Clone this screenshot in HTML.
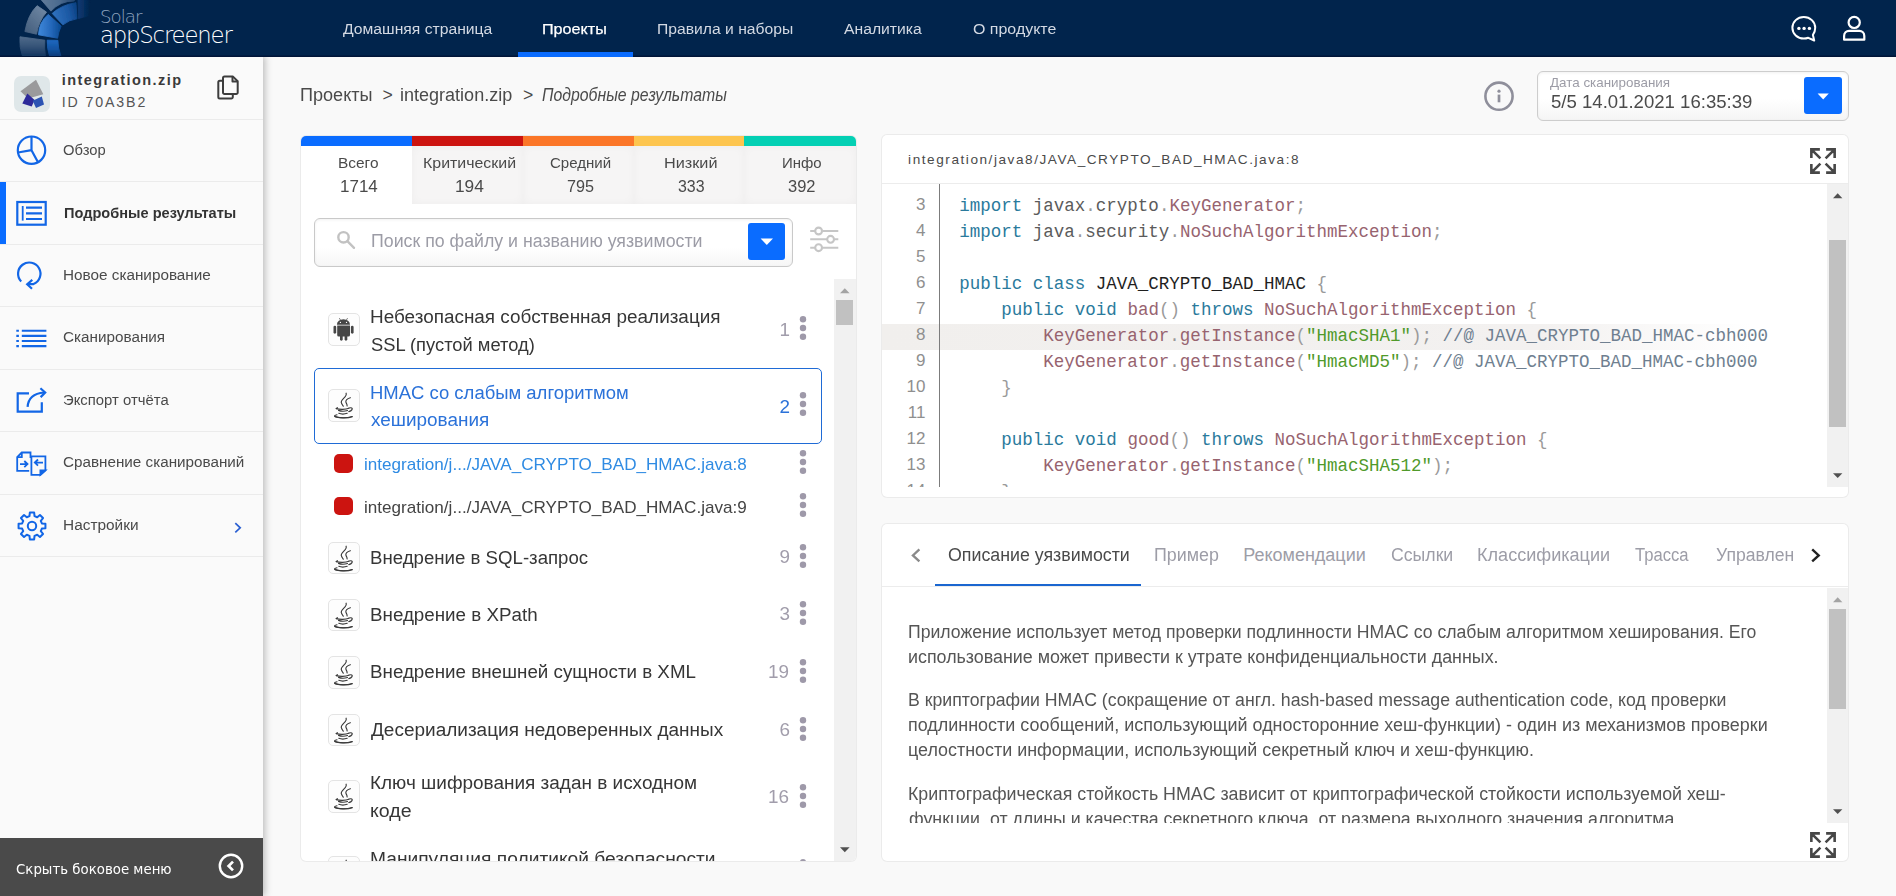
<!DOCTYPE html>
<html lang="ru">
<head>
<meta charset="utf-8">
<title>Solar appScreener</title>
<style>
*{box-sizing:border-box;margin:0;padding:0}
html,body{width:1896px;height:896px;overflow:hidden;background:#f9f9f9;font-family:"Liberation Sans",sans-serif;color:#4a4a4a}
body{position:relative}
.abs{position:absolute}
.t{position:absolute;white-space:nowrap;line-height:1}
#hdr{position:absolute;left:0;top:0;width:1896px;height:56.7px;background:linear-gradient(#01244c 0,#01244c 54.5px,#001336 56.7px);overflow:hidden}
#side{position:absolute;left:0;top:56px;width:263px;height:840px;background:#fafafa;box-shadow:2px 0 7px rgba(0,0,0,.25)}
.panel{position:absolute;background:#fff;border-radius:5px;box-shadow:0 0 0 1px rgba(0,0,0,.045),0 0 2px rgba(0,0,0,.05)}
.ib{position:absolute;left:328.4px;width:31.6px;height:32.4px;border:1px solid #e4e4e4;border-radius:5px;background:#fdfdfd;overflow:hidden}
.ib svg{position:absolute;left:-1px;top:-1px}
</style>
</head>
<body>
<main>
<div class="t" style="left:299.57px;top:84px;line-height:22px;font-size:17.6px;color:#4a4a4a;transform:scaleX(1.0282);transform-origin:0 0">Проекты</div>
<div class="t" style="left:382.4px;top:84px;line-height:22px;font-size:17.6px;color:#4a4a4a">&gt;</div>
<div class="t" style="left:400.38px;top:84px;line-height:22px;font-size:17.6px;color:#4a4a4a;transform:scaleX(1.0243);transform-origin:0 0">integration.zip</div>
<div class="t" style="left:522.9px;top:84px;line-height:22px;font-size:17.6px;color:#4a4a4a">&gt;</div>
<div class="t" style="left:541.9px;top:84px;line-height:22px;font-size:17.6px;color:#4a4a4a;font-style:italic;transform:scaleX(0.8986);transform-origin:0 0">Подробные результаты</div>
<svg class="abs" style="left:1482px;top:79px" width="34" height="34" viewBox="1482 79 34 34" fill="none" stroke="#8f8f9b" stroke-width="2.6"><circle cx="1499" cy="96.2" r="13.6"/><path d="M1499 94.6v7.7" stroke-width="2.7"/><circle cx="1499" cy="91.2" r="1.6" fill="#8f8f9b" stroke="none"/></svg>
<div class="abs" style="left:1537px;top:71px;width:312px;height:50px;border:1px solid #cdcdcd;border-radius:6px;background:linear-gradient(#fff 55%,#f5f5f5);box-shadow:inset 0 1px 3px rgba(0,0,0,.06)"></div>
<div class="t" style="left:1550.2px;top:75px;line-height:16px;font-size:12.6px;color:#9c9ca6;transform:scaleX(1.0642);transform-origin:0 0">Дата сканирования</div>
<div class="t" style="left:1551.2px;top:90px;line-height:23px;font-size:18.5px;color:#4a4a4a;transform:scaleX(1.0039);transform-origin:0 0">5/5 14.01.2021 16:35:39</div>
<div class="abs" style="left:1804px;top:77px;width:38px;height:37px;border-radius:3px;background:#0a6cff"></div>
<svg class="abs" style="left:1817px;top:92.6px" width="13" height="8" viewBox="0 0 13 8"><path d="M.6.5h11.2l-5.6 5.9z" fill="#fff"/></svg>
<div class="panel" style="left:301px;top:136px;width:554.6px;height:725px;overflow:hidden">
<div class="abs" style="left:0px;top:0;width:111.7px;height:10px;background:#0a6cff"></div>
<div class="abs" style="left:111.2px;top:0;width:111.1px;height:10px;background:#cc1410"></div>
<div class="abs" style="left:221.8px;top:0;width:111.7px;height:10px;background:#fb7628"></div>
<div class="abs" style="left:333px;top:0;width:110.3px;height:10px;background:#fdc54f"></div>
<div class="abs" style="left:442.8px;top:0;width:112.3px;height:10px;background:#04d0b4"></div>
<div class="abs" style="left:0;top:10px;width:555px;height:58px;background:#f6f5f5"></div>
<div class="abs" style="left:111.2px;top:10px;width:110.6px;height:58px;box-shadow:inset 0 0 8px rgba(0,0,0,.035)"></div>
<div class="abs" style="left:221.8px;top:10px;width:111.2px;height:58px;box-shadow:inset 0 0 8px rgba(0,0,0,.035)"></div>
<div class="abs" style="left:333px;top:10px;width:109.8px;height:58px;box-shadow:inset 0 0 8px rgba(0,0,0,.035)"></div>
<div class="abs" style="left:442.8px;top:10px;width:111.8px;height:58px;box-shadow:inset 0 0 8px rgba(0,0,0,.035)"></div>
<div class="abs" style="left:0;top:10px;width:111.2px;height:58px;background:#fff"></div>
<div class="abs" style="left:13px;top:81.5px;width:479px;height:49px;border:1px solid #c9c9c9;border-radius:6px;background:linear-gradient(#fff 60%,#f6f6f6);box-shadow:inset 0 1px 3px rgba(0,0,0,.06)"></div>
<svg class="abs" style="left:33px;top:92px" width="24" height="24" viewBox="334 228 24 24" fill="none" stroke="#c2c2c2" stroke-width="2.4"><circle cx="343.5" cy="237.3" r="5.2"/><path d="M347.4 241.2l6.6 6.6" stroke-linecap="round"/></svg>
<div class="abs" style="left:447px;top:87px;width:37px;height:37px;border-radius:3px;background:#0a6cff"></div>
<svg class="abs" style="left:459px;top:102px" width="14" height="8" viewBox="0 0 14 8"><path d="M.6.6h12.4l-6.2 6.3z" fill="#fff"/></svg>
<svg class="abs" style="left:507px;top:88px" width="32" height="32" viewBox="808 224 32 32" fill="none" stroke="#c6c6c6" stroke-width="2.1"><path d="M810.2 231h4.8M822.3 231h16M810.2 239.3h16.8M834.3 239.3h4M810.2 247.7h4.8M822.3 247.7h16"/><circle cx="818.6" cy="231" r="3.4"/><circle cx="830.6" cy="239.3" r="3.4"/><circle cx="818.6" cy="247.7" r="3.4"/></svg>
</div>
<div class="t" style="left:338.34px;top:154px;line-height:18px;font-size:14.6px;color:#4a4a4a;transform:scaleX(1.0579);transform-origin:0 0">Всего</div>
<div class="t" style="left:339.54px;top:177px;line-height:19px;font-size:16px;color:#4a4a4a;transform:scaleX(1.0607);transform-origin:0 0">1714</div>
<div class="t" style="left:422.81px;top:154px;line-height:18px;font-size:14.6px;color:#4a4a4a;transform:scaleX(1.0908);transform-origin:0 0">Критический</div>
<div class="t" style="left:454.72px;top:177px;line-height:19px;font-size:16px;color:#4a4a4a;transform:scaleX(1.0815);transform-origin:0 0">194</div>
<div class="t" style="left:550.3px;top:154px;line-height:18px;font-size:14.6px;color:#4a4a4a;transform:scaleX(1.0308);transform-origin:0 0">Средний</div>
<div class="t" style="left:566.6px;top:177px;line-height:19px;font-size:16px;color:#4a4a4a;transform:scaleX(1.0113);transform-origin:0 0">795</div>
<div class="t" style="left:664.29px;top:154px;line-height:18px;font-size:14.6px;color:#4a4a4a;transform:scaleX(1.1126);transform-origin:0 0">Низкий</div>
<div class="t" style="left:677.5px;top:177px;line-height:19px;font-size:16px;color:#4a4a4a;transform:scaleX(0.9964);transform-origin:0 0">333</div>
<div class="t" style="left:781.87px;top:154px;line-height:18px;font-size:14.6px;color:#4a4a4a;transform:scaleX(1.0251);transform-origin:0 0">Инфо</div>
<div class="t" style="left:788px;top:177px;line-height:19px;font-size:16px;color:#4a4a4a;transform:scaleX(1.03);transform-origin:0 0">392</div>
<div class="t" style="left:371.01px;top:230px;line-height:22px;font-size:18px;color:#9c9ca6;transform:scaleX(0.9863);transform-origin:0 0">Поиск по файлу и названию уязвимости</div>
<div class="abs" style="left:301px;top:279px;width:533px;height:582px;overflow:hidden"><div class="abs" style="left:-301px;top:-279px;width:1896px;height:896px">
<div class="abs" style="left:314px;top:368px;width:508px;height:76px;border:1.4px solid #1f6bd6;border-radius:5px"></div>
<div class="ib" style="top:313.4px"><svg width="32" height="32" viewBox="0 0 32 32"><g fill="#464646"><path d="M8.9 11.7a6.55 5.5 0 0 1 13.1 0z"/><path d="M9.2 12.6h12.8v9.3a1.5 1.5 0 0 1 -1.5 1.5h-9.8a1.5 1.5 0 0 1 -1.5 -1.5z"/><rect x="5.5" y="12.7" width="2.7" height="8" rx="1.35"/><rect x="22.9" y="12.7" width="2.7" height="8" rx="1.35"/><rect x="12" y="21" width="2.7" height="6.7" rx="1.35"/><rect x="16.6" y="21" width="2.7" height="6.7" rx="1.35"/><path d="M11.3 5.1l1.4 2.2M19.6 5.1l-1.4 2.2" stroke="#464646" stroke-width=".7"/></g><circle cx="12.4" cy="9.4" r=".65" fill="#fff"/><circle cx="18.5" cy="9.4" r=".65" fill="#fff"/></svg></div>
<div class="t" style="left:370.25px;top:306px;line-height:22px;font-size:18px;color:#363636;transform:scaleX(1.0508);transform-origin:0 0">Небезопасная собственная реализация</div>
<div class="t" style="left:371.3px;top:334px;line-height:22px;font-size:18px;color:#363636;transform:scaleX(1.0173);transform-origin:0 0">SSL (пустой метод)</div>
<div class="t" style="left:779.5px;top:319px;line-height:22px;font-size:18px;color:#a19dab;transform:scaleX(1.05);transform-origin:100% 0">1</div><svg class="abs" style="left:797.7px;top:315px" width="10" height="26" viewBox="-5 -13 10 26" fill="#9e99a9"><circle cy="-8.7" r="3.2"/><circle r="3.2"/><circle cy="8.7" r="3.2"/></svg>
<div class="ib" style="top:389.4px"><svg width="32" height="32" viewBox="0 0 32 32"><g fill="none" stroke="#3a3a3a" stroke-width="1.15" stroke-linecap="round"><path d="M18.1 4.2c1.5 4-5.5 5.5-4.8 9.5.3 1.5 1.2 2.5 2 3.5"/><path d="M22.3 8.7c-3 1-5.2 2.5-4.3 4.8.5 1.2 1.2 2.2 1.1 3.4"/><path d="M8.3 19.5c3 1.2 9.5 1.1 12.5-.2"/><path d="M9.5 18.7c-1.5.3-1.8.9-.5 1.2"/><path d="M21 19c2.5-.8 3.8.3 3 1.6-.6 1-1.8 1.7-3.2 2"/><path d="M10.5 21.4c2.5 1 6.5.9 9 .1"/><path d="M10.8 24.3c2.3.9 6 .8 8.4 0"/><path d="M9 25.8c-3.5.8-3.4 1.9.5 2.5 4.5.7 11 .4 14.5-.8"/><path d="M6.8 27.3c3 2 13 2.2 17.5.4"/></g></svg></div>
<div class="t" style="left:370.27px;top:382px;line-height:22px;font-size:18px;color:#2b72d9;transform:scaleX(1.0262);transform-origin:0 0">HMAC со слабым алгоритмом</div>
<div class="t" style="left:371.3px;top:409px;line-height:22px;font-size:18px;color:#2b72d9;transform:scaleX(1.052);transform-origin:0 0">хеширования</div>
<div class="t" style="left:779.5px;top:396px;line-height:22px;font-size:18px;color:#2b72d9;transform:scaleX(1.05);transform-origin:100% 0">2</div><svg class="abs" style="left:797.7px;top:390.9px" width="10" height="26" viewBox="-5 -13 10 26" fill="#9e99a9"><circle cy="-8.7" r="3.2"/><circle r="3.2"/><circle cy="8.7" r="3.2"/></svg>
<div class="abs" style="left:334px;top:454.2px;width:19px;height:18.5px;border-radius:5px;background:#cc1410"></div>
<div class="t" style="left:364.47px;top:454px;line-height:21px;font-size:16.6px;color:#2f8be3;transform:scaleX(1.0307);transform-origin:0 0">integration/j.../JAVA_CRYPTO_BAD_HMAC.java:8</div>
<div class="abs" style="left:334px;top:496.8px;width:19px;height:18.5px;border-radius:5px;background:#cc1410"></div>
<div class="t" style="left:364.47px;top:497px;line-height:21px;font-size:16.6px;color:#444444;transform:scaleX(1.0307);transform-origin:0 0">integration/j.../JAVA_CRYPTO_BAD_HMAC.java:9</div>
<svg class="abs" style="left:797.7px;top:449.2px" width="10" height="26" viewBox="-5 -13 10 26" fill="#9e99a9"><circle cy="-8.7" r="3.2"/><circle r="3.2"/><circle cy="8.7" r="3.2"/></svg>
<svg class="abs" style="left:797.7px;top:491.6px" width="10" height="26" viewBox="-5 -13 10 26" fill="#9e99a9"><circle cy="-8.7" r="3.2"/><circle r="3.2"/><circle cy="8.7" r="3.2"/></svg>
<div class="ib" style="top:541.5px"><svg width="32" height="32" viewBox="0 0 32 32"><g fill="none" stroke="#3a3a3a" stroke-width="1.15" stroke-linecap="round"><path d="M18.1 4.2c1.5 4-5.5 5.5-4.8 9.5.3 1.5 1.2 2.5 2 3.5"/><path d="M22.3 8.7c-3 1-5.2 2.5-4.3 4.8.5 1.2 1.2 2.2 1.1 3.4"/><path d="M8.3 19.5c3 1.2 9.5 1.1 12.5-.2"/><path d="M9.5 18.7c-1.5.3-1.8.9-.5 1.2"/><path d="M21 19c2.5-.8 3.8.3 3 1.6-.6 1-1.8 1.7-3.2 2"/><path d="M10.5 21.4c2.5 1 6.5.9 9 .1"/><path d="M10.8 24.3c2.3.9 6 .8 8.4 0"/><path d="M9 25.8c-3.5.8-3.4 1.9.5 2.5 4.5.7 11 .4 14.5-.8"/><path d="M6.8 27.3c3 2 13 2.2 17.5.4"/></g></svg></div>
<div class="t" style="left:370.26px;top:547px;line-height:22px;font-size:18px;color:#363636;transform:scaleX(1.0353);transform-origin:0 0">Внедрение в SQL-запрос</div>
<div class="t" style="left:779.5px;top:546px;line-height:22px;font-size:18px;color:#a19dab;transform:scaleX(1.05);transform-origin:100% 0">9</div><svg class="abs" style="left:797.7px;top:543px" width="10" height="26" viewBox="-5 -13 10 26" fill="#9e99a9"><circle cy="-8.7" r="3.2"/><circle r="3.2"/><circle cy="8.7" r="3.2"/></svg>
<div class="ib" style="top:598.9px"><svg width="32" height="32" viewBox="0 0 32 32"><g fill="none" stroke="#3a3a3a" stroke-width="1.15" stroke-linecap="round"><path d="M18.1 4.2c1.5 4-5.5 5.5-4.8 9.5.3 1.5 1.2 2.5 2 3.5"/><path d="M22.3 8.7c-3 1-5.2 2.5-4.3 4.8.5 1.2 1.2 2.2 1.1 3.4"/><path d="M8.3 19.5c3 1.2 9.5 1.1 12.5-.2"/><path d="M9.5 18.7c-1.5.3-1.8.9-.5 1.2"/><path d="M21 19c2.5-.8 3.8.3 3 1.6-.6 1-1.8 1.7-3.2 2"/><path d="M10.5 21.4c2.5 1 6.5.9 9 .1"/><path d="M10.8 24.3c2.3.9 6 .8 8.4 0"/><path d="M9 25.8c-3.5.8-3.4 1.9.5 2.5 4.5.7 11 .4 14.5-.8"/><path d="M6.8 27.3c3 2 13 2.2 17.5.4"/></g></svg></div>
<div class="t" style="left:370.26px;top:604px;line-height:22px;font-size:18px;color:#363636;transform:scaleX(1.043);transform-origin:0 0">Внедрение в XPath</div>
<div class="t" style="left:779.5px;top:603px;line-height:22px;font-size:18px;color:#a19dab;transform:scaleX(1.05);transform-origin:100% 0">3</div><svg class="abs" style="left:797.7px;top:600.4px" width="10" height="26" viewBox="-5 -13 10 26" fill="#9e99a9"><circle cy="-8.7" r="3.2"/><circle r="3.2"/><circle cy="8.7" r="3.2"/></svg>
<div class="ib" style="top:656.4px"><svg width="32" height="32" viewBox="0 0 32 32"><g fill="none" stroke="#3a3a3a" stroke-width="1.15" stroke-linecap="round"><path d="M18.1 4.2c1.5 4-5.5 5.5-4.8 9.5.3 1.5 1.2 2.5 2 3.5"/><path d="M22.3 8.7c-3 1-5.2 2.5-4.3 4.8.5 1.2 1.2 2.2 1.1 3.4"/><path d="M8.3 19.5c3 1.2 9.5 1.1 12.5-.2"/><path d="M9.5 18.7c-1.5.3-1.8.9-.5 1.2"/><path d="M21 19c2.5-.8 3.8.3 3 1.6-.6 1-1.8 1.7-3.2 2"/><path d="M10.5 21.4c2.5 1 6.5.9 9 .1"/><path d="M10.8 24.3c2.3.9 6 .8 8.4 0"/><path d="M9 25.8c-3.5.8-3.4 1.9.5 2.5 4.5.7 11 .4 14.5-.8"/><path d="M6.8 27.3c3 2 13 2.2 17.5.4"/></g></svg></div>
<div class="t" style="left:370.26px;top:661px;line-height:22px;font-size:18px;color:#363636;transform:scaleX(1.0424);transform-origin:0 0">Внедрение внешней сущности в XML</div>
<div class="t" style="left:769.49px;top:661px;line-height:22px;font-size:18px;color:#a19dab;transform:scaleX(1.05);transform-origin:100% 0">19</div><svg class="abs" style="left:797.7px;top:657.9px" width="10" height="26" viewBox="-5 -13 10 26" fill="#9e99a9"><circle cy="-8.7" r="3.2"/><circle r="3.2"/><circle cy="8.7" r="3.2"/></svg>
<div class="ib" style="top:714px"><svg width="32" height="32" viewBox="0 0 32 32"><g fill="none" stroke="#3a3a3a" stroke-width="1.15" stroke-linecap="round"><path d="M18.1 4.2c1.5 4-5.5 5.5-4.8 9.5.3 1.5 1.2 2.5 2 3.5"/><path d="M22.3 8.7c-3 1-5.2 2.5-4.3 4.8.5 1.2 1.2 2.2 1.1 3.4"/><path d="M8.3 19.5c3 1.2 9.5 1.1 12.5-.2"/><path d="M9.5 18.7c-1.5.3-1.8.9-.5 1.2"/><path d="M21 19c2.5-.8 3.8.3 3 1.6-.6 1-1.8 1.7-3.2 2"/><path d="M10.5 21.4c2.5 1 6.5.9 9 .1"/><path d="M10.8 24.3c2.3.9 6 .8 8.4 0"/><path d="M9 25.8c-3.5.8-3.4 1.9.5 2.5 4.5.7 11 .4 14.5-.8"/><path d="M6.8 27.3c3 2 13 2.2 17.5.4"/></g></svg></div>
<div class="t" style="left:371.3px;top:719px;line-height:22px;font-size:18px;color:#363636;transform:scaleX(1.055);transform-origin:0 0">Десериализация недоверенных данных</div>
<div class="t" style="left:779.5px;top:719px;line-height:22px;font-size:18px;color:#a19dab;transform:scaleX(1.05);transform-origin:100% 0">6</div><svg class="abs" style="left:797.7px;top:715.5px" width="10" height="26" viewBox="-5 -13 10 26" fill="#9e99a9"><circle cy="-8.7" r="3.2"/><circle r="3.2"/><circle cy="8.7" r="3.2"/></svg>
<div class="ib" style="top:780.4px"><svg width="32" height="32" viewBox="0 0 32 32"><g fill="none" stroke="#3a3a3a" stroke-width="1.15" stroke-linecap="round"><path d="M18.1 4.2c1.5 4-5.5 5.5-4.8 9.5.3 1.5 1.2 2.5 2 3.5"/><path d="M22.3 8.7c-3 1-5.2 2.5-4.3 4.8.5 1.2 1.2 2.2 1.1 3.4"/><path d="M8.3 19.5c3 1.2 9.5 1.1 12.5-.2"/><path d="M9.5 18.7c-1.5.3-1.8.9-.5 1.2"/><path d="M21 19c2.5-.8 3.8.3 3 1.6-.6 1-1.8 1.7-3.2 2"/><path d="M10.5 21.4c2.5 1 6.5.9 9 .1"/><path d="M10.8 24.3c2.3.9 6 .8 8.4 0"/><path d="M9 25.8c-3.5.8-3.4 1.9.5 2.5 4.5.7 11 .4 14.5-.8"/><path d="M6.8 27.3c3 2 13 2.2 17.5.4"/></g></svg></div>
<div class="t" style="left:370.25px;top:772px;line-height:22px;font-size:18px;color:#363636;transform:scaleX(1.0536);transform-origin:0 0">Ключ шифрования задан в исходном</div>
<div class="t" style="left:370.21px;top:800px;line-height:22px;font-size:18px;color:#363636;transform:scaleX(1.0862);transform-origin:0 0">коде</div>
<div class="t" style="left:769.49px;top:786px;line-height:22px;font-size:18px;color:#a19dab;transform:scaleX(1.05);transform-origin:100% 0">16</div><svg class="abs" style="left:797.7px;top:782.6px" width="10" height="26" viewBox="-5 -13 10 26" fill="#9e99a9"><circle cy="-8.7" r="3.2"/><circle r="3.2"/><circle cy="8.7" r="3.2"/></svg>
<div class="ib" style="top:856.3px"><svg width="32" height="32" viewBox="0 0 32 32"><g fill="none" stroke="#3a3a3a" stroke-width="1.15" stroke-linecap="round"><path d="M18.1 4.2c1.5 4-5.5 5.5-4.8 9.5.3 1.5 1.2 2.5 2 3.5"/><path d="M22.3 8.7c-3 1-5.2 2.5-4.3 4.8.5 1.2 1.2 2.2 1.1 3.4"/><path d="M8.3 19.5c3 1.2 9.5 1.1 12.5-.2"/><path d="M9.5 18.7c-1.5.3-1.8.9-.5 1.2"/><path d="M21 19c2.5-.8 3.8.3 3 1.6-.6 1-1.8 1.7-3.2 2"/><path d="M10.5 21.4c2.5 1 6.5.9 9 .1"/><path d="M10.8 24.3c2.3.9 6 .8 8.4 0"/><path d="M9 25.8c-3.5.8-3.4 1.9.5 2.5 4.5.7 11 .4 14.5-.8"/><path d="M6.8 27.3c3 2 13 2.2 17.5.4"/></g></svg></div>
<div class="t" style="left:370.23px;top:848px;line-height:22px;font-size:18px;color:#363636;transform:scaleX(1.0664);transform-origin:0 0">Манипуляция политикой безопасности</div>
<svg class="abs" style="left:797.7px;top:857.5px" width="10" height="26" viewBox="-5 -13 10 26" fill="#9e99a9"><circle cy="-8.7" r="3.2"/><circle r="3.2"/><circle cy="8.7" r="3.2"/></svg>
</div></div>
<div class="abs" style="left:834.3px;top:279px;width:21.3px;height:582px;background:#f1f1f1;border-bottom-right-radius:5px"></div>
<div class="abs" style="left:836px;top:300px;width:17px;height:25px;background:#c1c1c1"></div>
<svg class="abs" style="left:839.5px;top:287.8px" width="10" height="6" viewBox="0 0 10 6"><path d="M0 5.3h9.6l-4.8-5z" fill="#a3a3a3"/></svg>
<svg class="abs" style="left:839.5px;top:847px" width="10" height="6" viewBox="0 0 10 6"><path d="M0 .2h9.6l-4.8 5z" fill="#505050"/></svg>
<div class="panel" style="left:882px;top:135px;width:966px;height:362px"></div>
<div class="t" style="left:908.1px;top:151px;line-height:17px;font-size:13.6px;color:#4a4a4a;letter-spacing:1.547px">integration/java8/JAVA_CRYPTO_BAD_HMAC.java:8</div>
<div class="abs" style="left:882px;top:183px;width:966px;height:1px;background:#ececec"></div>
<svg class="abs" style="left:1810px;top:148px" width="26" height="26" viewBox="0 0 25 25" fill="none" stroke="#474747" stroke-width="2.5">
<path d="M1.3 9.5v-8.2h8.2M2 2l8 8M15.5 1.3h8.2v8.2M23 2l-8 8M1.3 15.5v8.2h8.2M2 23l8-8M23.7 15.5v8.2h-8.2M23 23l-8-8"/></svg>
<div class="abs" style="left:882px;top:184px;width:945px;height:302.7px;overflow:hidden"><div class="abs" style="left:-882px;top:-184px;width:1896px;height:896px">
<div class="abs" style="left:882px;top:324px;width:945px;height:26px;background:linear-gradient(90deg,#f1efed 0,#f3f1f0 70%,#fff 92%)"></div>
<div class="abs" style="left:939px;top:184px;width:1.2px;height:310px;background:#7c7c7c"></div>
<div class="t" style="left:916px;top:194px;line-height:21px;font-size:17px;color:#8f8f8f">3</div>
<div class="t" style="left:959.3px;top:195px;line-height:22px;font-size:17.5px;color:#5b5b5b;font-family:'Liberation Mono',monospace;white-space:pre"><span style="color:#2a7a9c">import</span> <span style="color:#5b5b5b">javax</span><span style="color:#9a9a9a">.</span><span style="color:#5b5b5b">crypto</span><span style="color:#9a9a9a">.</span><span style="color:#97636f">KeyGenerator</span><span style="color:#9a9a9a">;</span></div>
<div class="t" style="left:916px;top:220px;line-height:21px;font-size:17px;color:#8f8f8f">4</div>
<div class="t" style="left:959.3px;top:221px;line-height:22px;font-size:17.5px;color:#5b5b5b;font-family:'Liberation Mono',monospace;white-space:pre"><span style="color:#2a7a9c">import</span> <span style="color:#5b5b5b">java</span><span style="color:#9a9a9a">.</span><span style="color:#5b5b5b">security</span><span style="color:#9a9a9a">.</span><span style="color:#97636f">NoSuchAlgorithmException</span><span style="color:#9a9a9a">;</span></div>
<div class="t" style="left:916px;top:246px;line-height:21px;font-size:17px;color:#8f8f8f">5</div>
<div class="t" style="left:916px;top:272px;line-height:21px;font-size:17px;color:#8f8f8f">6</div>
<div class="t" style="left:959.3px;top:273px;line-height:22px;font-size:17.5px;color:#5b5b5b;font-family:'Liberation Mono',monospace;white-space:pre"><span style="color:#2a7a9c">public</span> <span style="color:#2a7a9c">class</span> <span style="color:#1f1f1f">JAVA_CRYPTO_BAD_HMAC</span> <span style="color:#9a9a9a">{</span></div>
<div class="t" style="left:916px;top:298px;line-height:21px;font-size:17px;color:#8f8f8f">7</div>
<div class="t" style="left:959.3px;top:299px;line-height:22px;font-size:17.5px;color:#5b5b5b;font-family:'Liberation Mono',monospace;white-space:pre">    <span style="color:#2a7a9c">public</span> <span style="color:#2a7a9c">void</span> <span style="color:#97636f">bad</span><span style="color:#9a9a9a">()</span> <span style="color:#2a7a9c">throws</span> <span style="color:#97636f">NoSuchAlgorithmException</span> <span style="color:#9a9a9a">{</span></div>
<div class="t" style="left:916px;top:324px;line-height:21px;font-size:17px;color:#8f8f8f">8</div>
<div class="t" style="left:959.3px;top:325px;line-height:22px;font-size:17.5px;color:#5b5b5b;font-family:'Liberation Mono',monospace;white-space:pre">        <span style="color:#97636f">KeyGenerator</span><span style="color:#9a9a9a">.</span><span style="color:#97636f">getInstance</span><span style="color:#9a9a9a">(</span><span style="color:#509a2b">&quot;HmacSHA1&quot;</span><span style="color:#9a9a9a">);</span> <span style="color:#6f7f90">//@ JAVA_CRYPTO_BAD_HMAC-cbh000</span></div>
<div class="t" style="left:916px;top:350px;line-height:21px;font-size:17px;color:#8f8f8f">9</div>
<div class="t" style="left:959.3px;top:351px;line-height:22px;font-size:17.5px;color:#5b5b5b;font-family:'Liberation Mono',monospace;white-space:pre">        <span style="color:#97636f">KeyGenerator</span><span style="color:#9a9a9a">.</span><span style="color:#97636f">getInstance</span><span style="color:#9a9a9a">(</span><span style="color:#509a2b">&quot;HmacMD5&quot;</span><span style="color:#9a9a9a">);</span> <span style="color:#6f7f90">//@ JAVA_CRYPTO_BAD_HMAC-cbh000</span></div>
<div class="t" style="left:906.55px;top:376px;line-height:21px;font-size:17px;color:#8f8f8f">10</div>
<div class="t" style="left:959.3px;top:377px;line-height:22px;font-size:17.5px;color:#5b5b5b;font-family:'Liberation Mono',monospace;white-space:pre">    <span style="color:#9a9a9a">}</span></div>
<div class="t" style="left:907.81px;top:402px;line-height:21px;font-size:17px;color:#8f8f8f">11</div>
<div class="t" style="left:906.55px;top:428px;line-height:21px;font-size:17px;color:#8f8f8f">12</div>
<div class="t" style="left:959.3px;top:429px;line-height:22px;font-size:17.5px;color:#5b5b5b;font-family:'Liberation Mono',monospace;white-space:pre">    <span style="color:#2a7a9c">public</span> <span style="color:#2a7a9c">void</span> <span style="color:#97636f">good</span><span style="color:#9a9a9a">()</span> <span style="color:#2a7a9c">throws</span> <span style="color:#97636f">NoSuchAlgorithmException</span> <span style="color:#9a9a9a">{</span></div>
<div class="t" style="left:906.55px;top:454px;line-height:21px;font-size:17px;color:#8f8f8f">13</div>
<div class="t" style="left:959.3px;top:455px;line-height:22px;font-size:17.5px;color:#5b5b5b;font-family:'Liberation Mono',monospace;white-space:pre">        <span style="color:#97636f">KeyGenerator</span><span style="color:#9a9a9a">.</span><span style="color:#97636f">getInstance</span><span style="color:#9a9a9a">(</span><span style="color:#509a2b">&quot;HmacSHA512&quot;</span><span style="color:#9a9a9a">);</span></div>
<div class="t" style="left:906.55px;top:480px;line-height:21px;font-size:17px;color:#8f8f8f">14</div>
<div class="t" style="left:959.3px;top:481px;line-height:22px;font-size:17.5px;color:#5b5b5b;font-family:'Liberation Mono',monospace;white-space:pre">    <span style="color:#9a9a9a">}</span></div>
</div></div>
<div class="abs" style="left:1827px;top:184px;width:21px;height:302.7px;background:#f1f1f1"></div>
<div class="abs" style="left:1829.2px;top:240px;width:16.8px;height:187px;background:#c1c1c1"></div>
<svg class="abs" style="left:1832.8px;top:193.2px" width="10" height="6" viewBox="0 0 10 6"><path d="M0 5.2h9.4l-4.7-4.9z" fill="#505050"/></svg>
<svg class="abs" style="left:1832.8px;top:472.8px" width="10" height="6" viewBox="0 0 10 6"><path d="M0 .2h9.4l-4.7 4.9z" fill="#505050"/></svg>
<div class="panel" style="left:882px;top:524px;width:966px;height:337px"></div>
<svg class="abs" style="left:908px;top:546px" width="16" height="18" viewBox="908 546 16 18" fill="none" stroke="#8a8a8a" stroke-width="2.3"><path d="M919.4 549.4l-6.5 6 6.5 6"/></svg>
<svg class="abs" style="left:1808px;top:546px" width="16" height="18" viewBox="1808 546 16 18" fill="none" stroke="#222" stroke-width="2.4"><path d="M1812.2 549.4l6.5 6-6.5 6"/></svg>
<div class="t" style="left:948px;top:544px;line-height:22px;font-size:18px;color:#4a4a4a;transform:scaleX(0.9882);transform-origin:0 0">Описание уязвимости</div>
<div class="t" style="left:1153.51px;top:544px;line-height:22px;font-size:18px;color:#9d9da7;transform:scaleX(0.9924);transform-origin:0 0">Пример</div>
<div class="t" style="left:1243.2px;top:544px;line-height:22px;font-size:18px;color:#9d9da7">Рекомендации</div>
<div class="t" style="left:1391.1px;top:544px;line-height:22px;font-size:18px;color:#9d9da7;transform:scaleX(0.9821);transform-origin:0 0">Ссылки</div>
<div class="t" style="left:1477.1px;top:544px;line-height:22px;font-size:18px;color:#9d9da7;transform:scaleX(1.0041);transform-origin:0 0">Классификации</div>
<div class="t" style="left:1635.1px;top:544px;line-height:22px;font-size:18px;color:#9d9da7;transform:scaleX(0.9236);transform-origin:0 0">Трасса</div>
<div class="t" style="left:1716px;top:544px;line-height:22px;font-size:18px;color:#9d9da7;transform:scaleX(0.9778);transform-origin:0 0">Управлен</div>
<div class="abs" style="left:882px;top:586px;width:966px;height:1px;background:#ececec"></div>
<div class="abs" style="left:935px;top:584px;width:206px;height:2.3px;background:#1a66d0"></div>
<div class="abs" style="left:882px;top:588px;width:945px;height:235.3px;overflow:hidden"><div class="abs" style="left:-882px;top:-588px;width:1896px;height:896px">
<div class="t" style="left:908.02px;top:621px;line-height:22px;font-size:18px;color:#555555;transform:scaleX(0.9799);transform-origin:0 0">Приложение использует метод проверки подлинности HMAC со слабым алгоритмом хеширования. Его</div>
<div class="t" style="left:908.01px;top:646px;line-height:22px;font-size:18px;color:#555555;transform:scaleX(0.9924);transform-origin:0 0">использование может привести к утрате конфиденциальности данных.</div>
<div class="t" style="left:908.02px;top:689px;line-height:22px;font-size:18px;color:#555555;transform:scaleX(0.9826);transform-origin:0 0">В криптографии HMAC (сокращение от англ. hash-based message authentication code, код проверки</div>
<div class="t" style="left:908px;top:714px;line-height:22px;font-size:18px;color:#555555;transform:scaleX(0.997);transform-origin:0 0">подлинности сообщений, использующий односторонние хеш-функции) - один из механизмов проверки</div>
<div class="t" style="left:908.01px;top:739px;line-height:22px;font-size:18px;color:#555555;transform:scaleX(0.9948);transform-origin:0 0">целостности информации, использующий секретный ключ и хеш-функцию.</div>
<div class="t" style="left:908.01px;top:783px;line-height:22px;font-size:18px;color:#555555;transform:scaleX(0.9886);transform-origin:0 0">Криптографическая стойкость HMAC зависит от криптографической стойкости используемой хеш-</div>
<div class="t" style="left:909px;top:808px;line-height:22px;font-size:18px;color:#555555;transform:scaleX(0.9882);transform-origin:0 0">функции, от длины и качества секретного ключа, от размера выходного значения алгоритма</div>
</div></div>
<div class="abs" style="left:1827px;top:588px;width:21px;height:235.3px;background:#f1f1f1"></div>
<div class="abs" style="left:1829.2px;top:609px;width:16.8px;height:100.4px;background:#c1c1c1"></div>
<svg class="abs" style="left:1832.8px;top:597.3px" width="10" height="6" viewBox="0 0 10 6"><path d="M0 5.2h9.4l-4.7-4.9z" fill="#a3a3a3"/></svg>
<svg class="abs" style="left:1832.8px;top:808.8px" width="10" height="6" viewBox="0 0 10 6"><path d="M0 .2h9.4l-4.7 4.9z" fill="#505050"/></svg>
<svg class="abs" style="left:1810px;top:832px" width="26" height="26" viewBox="0 0 25 25" fill="none" stroke="#474747" stroke-width="2.5">
<path d="M1.3 9.5v-8.2h8.2M2 2l8 8M15.5 1.3h8.2v8.2M23 2l-8 8M1.3 15.5v8.2h8.2M2 23l8-8M23.7 15.5v8.2h-8.2M23 23l-8-8"/></svg>
</main>
<aside>
<div id="side"></div>
<div class="abs" style="left:13.5px;top:75.5px;width:36px;height:36px;border-radius:7px;background:#dfe7e9;overflow:hidden">
<svg width="36" height="36" viewBox="13.5 75.5 36 36"><polygon points="35.5,79.2 42.8,93.7 27.6,98.1 20,90.8" fill="#9a9a9c"/><polygon points="26.8,93 34.1,99.5 31.2,106 21.8,103.1" fill="#2e2a9a"/><polygon points="41.3,95.9 43.5,103.9 35.5,107.5 32.2,100.2" fill="#2b53b3"/></svg></div>
<div class="t" style="left:61.7px;top:71px;line-height:18px;font-size:14.5px;color:#3a3a3a;font-weight:bold;letter-spacing:1.456px">integration.zip</div>
<div class="t" style="left:61.7px;top:93px;line-height:18px;font-size:14.2px;color:#555555;letter-spacing:1.872px">ID 70A3B2</div>
<svg class="abs" style="left:214px;top:73px" width="28" height="28" viewBox="214 73 28 28" fill="none" stroke="#3d3d3d" stroke-width="2" stroke-linejoin="round">
<path d="M224.5 76.6h8.5l4.7 4.7v11.2a1.5 1.5 0 0 1 -1.5 1.5h-11.7a1.5 1.5 0 0 1 -1.5 -1.5v-14.4a1.5 1.5 0 0 1 1.5 -1.5z"/><path d="M232.5 76.6v5h5.2"/>
<path d="M222.8 80.8h-3a1.5 1.5 0 0 0 -1.5 1.5v14.7a1.5 1.5 0 0 0 1.5 1.5h11.5a1.5 1.5 0 0 0 1.5 -1.5v-3"/></svg>
<div class="abs" style="left:0;top:119px;width:263px;height:1px;background:#ebebeb"></div>
<div class="abs" style="left:0;top:181px;width:263px;height:1px;background:#ebebeb"></div>
<div class="abs" style="left:0;top:244px;width:263px;height:1px;background:#ebebeb"></div>
<div class="abs" style="left:0;top:306px;width:263px;height:1px;background:#ebebeb"></div>
<div class="abs" style="left:0;top:369px;width:263px;height:1px;background:#ebebeb"></div>
<div class="abs" style="left:0;top:431px;width:263px;height:1px;background:#ebebeb"></div>
<div class="abs" style="left:0;top:494px;width:263px;height:1px;background:#ebebeb"></div>
<div class="abs" style="left:0;top:556px;width:263px;height:1px;background:#ebebeb"></div>
<div class="abs" style="left:0;top:182px;width:6px;height:62px;background:#0a6cff"></div>
<svg class="abs" style="left:15px;top:133px" width="34" height="34" viewBox="15 133 34 34" fill="none" stroke="#1266e6" stroke-width="2.2"><circle cx="31.5" cy="150.2" r="13.7"/><path d="M31.5 136.5v13.7l6.5 12M31.5 150.2l-13.5 2.3"/></svg>
<svg class="abs" style="left:15px;top:195px" width="34" height="34" viewBox="15 195 34 34" fill="none" stroke="#1266e6" stroke-width="2.2"><rect x="17.3" y="202" width="28.4" height="22.7"/><path d="M22.7 206v14.6" stroke-width="1.8"/><path d="M26 207.6h16M26 213.3h16M26 219h16"/></svg>
<svg class="abs" style="left:15px;top:258px" width="34" height="34" viewBox="15 258 34 34" fill="none" stroke="#1266e6" stroke-width="2.2"><path d="M21.2 281.5a11.2 11.2 0 1 1 12.3 2.6h-5.8"/><path d="M32.3 279.8l-5.1 4.4 4.8 4.5"/></svg>
<svg class="abs" style="left:15px;top:321px" width="34" height="34" viewBox="15 321 34 34" fill="none" stroke="#1266e6" stroke-width="2.1"><path d="M21.8 330.8h24.6M21.8 335.9h24.6M21.8 341h24.6M21.8 346.1h24.6"/><path d="M16.3 330.8h2.6M16.3 335.9h2.6M16.3 341h2.6M16.3 346.1h2.6"/></svg>
<svg class="abs" style="left:15px;top:383px" width="34" height="34" viewBox="15 383 34 34" fill="none" stroke="#1266e6" stroke-width="2.2"><path d="M29 393.3h-11.3v18.4h24.1v-9.5"/><path d="M27.6 406.8c.5-7 5-13.3 16.5-14.3"/><path d="M40.4 388.2l4.8 4.3-4.6 4.6"/></svg>
<svg class="abs" style="left:15px;top:446px" width="34" height="34" viewBox="15 446 34 34" fill="none" stroke="#1266e6" stroke-width="1.8"><path d="M30.5 458v-5.5h-8.7l-4.6 4.6v13.7h12"/><path d="M21.8 452.5v4.6h-4.6"/><path d="M31.4 456.3h14v14l-5 4.5h-9z"/><path d="M45.4 470.3h-5v4.5z" fill="#1266e6"/><path d="M20 464.1h7M24.3 461l3.2 3.1-3.2 3.1"/><path d="M43 462.6h-8M38 459.5l-3.2 3.1 3.2 3.1"/></svg>
<svg class="abs" style="left:14.5px;top:508.5px" width="34" height="34" viewBox="-17 -17 34 34" fill="none" stroke="#1266e6" stroke-width="2" stroke-linejoin="round"><circle r="4.2"/><path d="M-2.52 -9.88L-2.17 -13.43L2.17 -13.43L2.52 -9.88L5.2 -8.77L7.96 -11.03L11.03 -7.96L8.77 -5.2L9.88 -2.52L13.43 -2.17L13.43 2.17L9.88 2.52L8.77 5.2L11.03 7.96L7.96 11.03L5.2 8.77L2.52 9.88L2.17 13.43L-2.17 13.43L-2.52 9.88L-5.2 8.77L-7.96 11.03L-11.03 7.96L-8.77 5.2L-9.88 2.52L-13.43 2.17L-13.43 -2.17L-9.88 -2.52L-8.77 -5.2L-11.03 -7.96L-7.96 -11.03L-5.2 -8.77Z"/></svg>
<svg class="abs" style="left:230px;top:521px" width="14" height="14" viewBox="230 521 14 14" fill="none" stroke="#2a5fd2" stroke-width="1.7"><path d="M235.3 523.2l4.9 4.6-4.9 4.6"/></svg>
<div class="t" style="left:63.1px;top:141px;line-height:18px;font-size:14.7px;color:#4a4a4a;transform:scaleX(1.0059);transform-origin:0 0">Обзор</div>
<div class="t" style="left:63.6px;top:204px;line-height:18px;font-size:14.7px;color:#333333;font-weight:bold;transform:scaleX(0.9924);transform-origin:0 0">Подробные результаты</div>
<div class="t" style="left:62.56px;top:266px;line-height:18px;font-size:14.7px;color:#4a4a4a;transform:scaleX(1.0407);transform-origin:0 0">Новое сканирование</div>
<div class="t" style="left:62.9px;top:328px;line-height:18px;font-size:14.7px;color:#4a4a4a;transform:scaleX(1.0391);transform-origin:0 0">Сканирования</div>
<div class="t" style="left:62.9px;top:391px;line-height:18px;font-size:14.7px;color:#4a4a4a;transform:scaleX(1.0122);transform-origin:0 0">Экспорт отчёта</div>
<div class="t" style="left:62.9px;top:453px;line-height:18px;font-size:14.7px;color:#4a4a4a;transform:scaleX(1.0371);transform-origin:0 0">Сравнение сканирований</div>
<div class="t" style="left:62.55px;top:516px;line-height:18px;font-size:14.7px;color:#4a4a4a;transform:scaleX(1.0492);transform-origin:0 0">Настройки</div>
<div class="abs" style="left:0;top:838px;width:263px;height:58px;background:#4a4a4a"></div>
<div class="t" style="left:16.4px;top:860px;line-height:18px;font-size:14px;color:#ffffff;font-family:'DejaVu Sans','Liberation Sans',sans-serif;transform:scaleX(0.9532);transform-origin:0 0">Скрыть боковое меню</div>
<svg class="abs" style="left:217.4px;top:852.3px" width="28" height="28" viewBox="0 0 28 28" fill="none" stroke="#fff" stroke-width="2.4"><circle cx="14" cy="14" r="11.2"/><path d="M16 9.6l-4.4 4.4 4.4 4.4" stroke-width="2.7"/></svg>
</aside>
<header>
<div id="hdr">
<svg class="abs" style="left:0;top:0" width="130" height="56" viewBox="0 0 130 56">
<defs>
<linearGradient id="gA" x1="25" y1="30" x2="46" y2="8" gradientUnits="userSpaceOnUse"><stop offset="0" stop-color="#46607f"/><stop offset="1" stop-color="#7088a4"/></linearGradient>
<linearGradient id="gB" x1="42" y1="0" x2="76" y2="0" gradientUnits="userSpaceOnUse"><stop offset="0" stop-color="#5f7a99"/><stop offset=".5" stop-color="#4c6b8f"/><stop offset="1" stop-color="#1f426e"/></linearGradient>
<linearGradient id="gC" x1="54" y1="14" x2="78" y2="8" gradientUnits="userSpaceOnUse"><stop offset="0" stop-color="#2e6fbc"/><stop offset=".6" stop-color="#1b58a3"/><stop offset="1" stop-color="#093f80"/></linearGradient>
<linearGradient id="gD" x1="39" y1="30" x2="61" y2="30" gradientUnits="userSpaceOnUse"><stop offset="0" stop-color="#3d86d8"/><stop offset=".55" stop-color="#2568bb"/><stop offset="1" stop-color="#0a4a93"/></linearGradient>
<linearGradient id="gE" x1="0" y1="37" x2="0" y2="56" gradientUnits="userSpaceOnUse"><stop offset="0" stop-color="#4f6a8a"/><stop offset=".5" stop-color="#355377"/><stop offset="1" stop-color="#143660"/></linearGradient>
<linearGradient id="gF" x1="0" y1="40" x2="0" y2="56" gradientUnits="userSpaceOnUse"><stop offset="0" stop-color="#1f68c0"/><stop offset=".6" stop-color="#12529f"/><stop offset="1" stop-color="#073b7a"/></linearGradient>
<linearGradient id="gG" x1="78" y1="0" x2="90" y2="0" gradientUnits="userSpaceOnUse"><stop offset="0" stop-color="#0c3a74"/><stop offset="1" stop-color="#01244c"/></linearGradient>
<filter id="lb" x="-5%" y="-5%" width="110%" height="110%"><feGaussianBlur stdDeviation=".45"/></filter>
</defs>
<g filter="url(#lb)"><path d="M24.9 31.5Q27.8 14.8 37.1 5.7L46.5 12.1Q38.7 21.1 36.5 34.2Z" fill="url(#gA)" stroke="url(#gA)" stroke-width=".9" stroke-linejoin="round"/><path d="M40.5 -1L74.3 -1L74.3 1Q60.4 0.8 50.9 11.1Z" fill="url(#gB)" stroke="url(#gB)" stroke-width=".9" stroke-linejoin="round"/><path d="M52.2 13.4Q61.7 4.8 76 2.7L77 18.8Q69.2 19.8 62.9 24.8Z" fill="url(#gC)" stroke="url(#gC)" stroke-width=".9" stroke-linejoin="round"/><path d="M38.5 34.8Q38.9 22.2 48.2 14.4L61.2 26.1Q58.4 32.2 57.6 38.2Z" fill="url(#gD)" stroke="url(#gD)" stroke-width=".9" stroke-linejoin="round"/><path d="M20 36.8L44.8 40.2Q44.1 47.4 45.5 57L22.6 57Q19.1 46.9 20 36.8Z" fill="url(#gE)" stroke="url(#gE)" stroke-width=".9" stroke-linejoin="round"/><path d="M47.2 40.2L57.9 40.4Q57.7 47.3 61.2 57L49.7 57Q46.8 47.4 47.2 40.2Z" fill="url(#gF)" stroke="url(#gF)" stroke-width=".9" stroke-linejoin="round"/><path d="M78 -1L90 -1L88 16L78.5 18.5Z" fill="url(#gG)" stroke="url(#gG)" stroke-width=".9" stroke-linejoin="round"/></g>
</svg>
<div class="t" style="left:99.9px;top:5px;line-height:23px;font-size:18.2px;color:#8fa3bf;font-family:'DejaVu Sans','Liberation Sans',sans-serif;font-weight:200;letter-spacing:-0.943px">Solar</div>
<div class="t" style="left:99.9px;top:21px;line-height:28px;font-size:22.8px;color:#ffffff;font-family:'DejaVu Sans','Liberation Sans',sans-serif;font-weight:200;letter-spacing:-1.181px">appScreener</div>
<div class="t" style="left:342.7px;top:19px;line-height:19px;font-size:15.5px;color:#d3d9e3;transform:scaleX(1.0126);transform-origin:0 0">Домашняя страница</div>
<div class="t" style="left:542.16px;top:19px;line-height:19px;font-size:15.5px;color:#ffffff;transform:scaleX(1.0417);transform-origin:0 0;-webkit-text-stroke:.25px #fff">Проекты</div>
<div class="t" style="left:656.59px;top:19px;line-height:19px;font-size:15.5px;color:#d3d9e3;transform:scaleX(1.0119);transform-origin:0 0">Правила и наборы</div>
<div class="t" style="left:843.9px;top:19px;line-height:19px;font-size:15.5px;color:#d3d9e3;transform:scaleX(1.013);transform-origin:0 0">Аналитика</div>
<div class="t" style="left:972.6px;top:19px;line-height:19px;font-size:15.5px;color:#d3d9e3;transform:scaleX(1.0295);transform-origin:0 0">О продукте</div>
<div class="abs" style="left:518px;top:52px;width:115px;height:4.7px;background:#0a6cff"></div>
<svg class="abs" style="left:1788px;top:12px" width="32" height="32" viewBox="0 0 32 32" fill="none" stroke="#fff" stroke-width="2" stroke-linejoin="round">
<path d="M15.8 5c-6.3 0-11.4 4.7-11.4 10.8 0 6.2 5.1 10.8 11.4 10.8 1.6 0 3.1-.3 4.5-.8l5.9 2.7-1.3-5.6c1.4-1.9 2.3-4.4 2.3-7.1 0-6.1-5.1-10.8-11.4-10.8z"/>
<g fill="#fff" stroke="none"><circle cx="10.9" cy="16.4" r="1.7"/><circle cx="16.1" cy="16.4" r="1.7"/><circle cx="21.4" cy="16.4" r="1.7"/></g></svg>
<svg class="abs" style="left:1838px;top:12px" width="32" height="32" viewBox="0 0 32 32" fill="none" stroke="#fff" stroke-width="2.2">
<circle cx="16.2" cy="10.4" r="5.6"/><path d="M6.1 27.7v-3.8c0-2.8 2.2-5 5-5h10.2c2.8 0 5 2.2 5 5v3.8z" stroke-linejoin="round"/></svg>
</div>
</header>
</body>
</html>
